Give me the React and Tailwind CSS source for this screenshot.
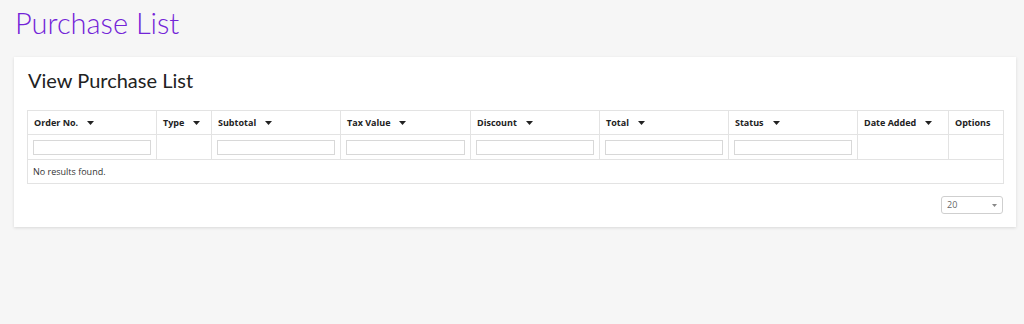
import React from "react";

const cols = [
  { label: "Order No.", w: 129, sort: true, filter: true },
  { label: "Type", w: 55, sort: true, filter: false },
  { label: "Subtotal", w: 129, sort: true, filter: true },
  { label: "Tax Value", w: 130, sort: true, filter: true },
  { label: "Discount", w: 129, sort: true, filter: true },
  { label: "Total", w: 129, sort: true, filter: true },
  { label: "Status", w: 129, sort: true, filter: true },
  { label: "Date Added", w: 91, sort: true, filter: false },
  { label: "Options", w: 55, sort: false, filter: false },
];

function Caret() {
  return (
    <svg width="7" height="4" viewBox="0 0 7 4" className="inline-block ml-[9px] mb-[1px]">
      <path d="M0 0 L7 0 L3.5 4 Z" fill="#222" />
    </svg>
  );
}

export default function App() {
  return (
    <div className="w-[1024px] h-[324px] bg-[#f6f6f6] overflow-hidden" style={{ fontFamily: "'Open Sans', sans-serif" }}>
      <h1 className="pl-[15px] pt-[5px] text-[29px] leading-[36px] font-light text-[#7324d8]" style={{ fontFamily: "Lato, sans-serif" }}>
        Purchase List
      </h1>
      <div className="ml-[14px] mt-[16px] w-[1002px] bg-white shadow-[0_1px_3px_rgba(0,0,0,0.12)] px-[13px] pt-[10px] pb-[13px]">
        <h2 className="pl-[1px] text-[20px] leading-[26px] text-[#222]" style={{ fontFamily: "Lato, sans-serif" }}>
          View Purchase List
        </h2>
        <table className="mt-[17px] border-collapse table-fixed w-[976px] text-[9px] text-[#333]">
          <colgroup>
            {cols.map((c) => (
              <col key={c.label} style={{ width: c.w }} />
            ))}
          </colgroup>
          <thead>
            <tr className="h-[24px]">
              {cols.map((c) => (
                <th key={c.label} className="border border-[#e3e3e3] text-left font-bold px-[6px] text-[#222] whitespace-nowrap">
                  {c.label}
                  {c.sort && <Caret />}
                </th>
              ))}
            </tr>
            <tr className="h-[25px]">
              {cols.map((c) => (
                <td key={c.label} className="border border-[#e3e3e3] px-[5px]">
                  {c.filter && <div className="h-[15px] border border-[#d8d8d8] bg-white" />}
                </td>
              ))}
            </tr>
          </thead>
          <tbody>
            <tr className="h-[24px]">
              <td colSpan={9} className="border border-[#e3e3e3] px-[5px] text-[#333]">
                No results found.
              </td>
            </tr>
          </tbody>
        </table>
        <div className="flex justify-end mt-[12px]">
          <div className="w-[62px] h-[18px] border border-[#cfcfcf] rounded-[3px] flex items-center justify-between pl-[5px] pr-[5px] text-[9px] text-[#666]">
            <span>20</span>
            <svg width="5" height="3" viewBox="0 0 5 3">
              <path d="M0 0 L5 0 L2.5 3 Z" fill="#888" />
            </svg>
          </div>
        </div>
      </div>
    </div>
  );
}
